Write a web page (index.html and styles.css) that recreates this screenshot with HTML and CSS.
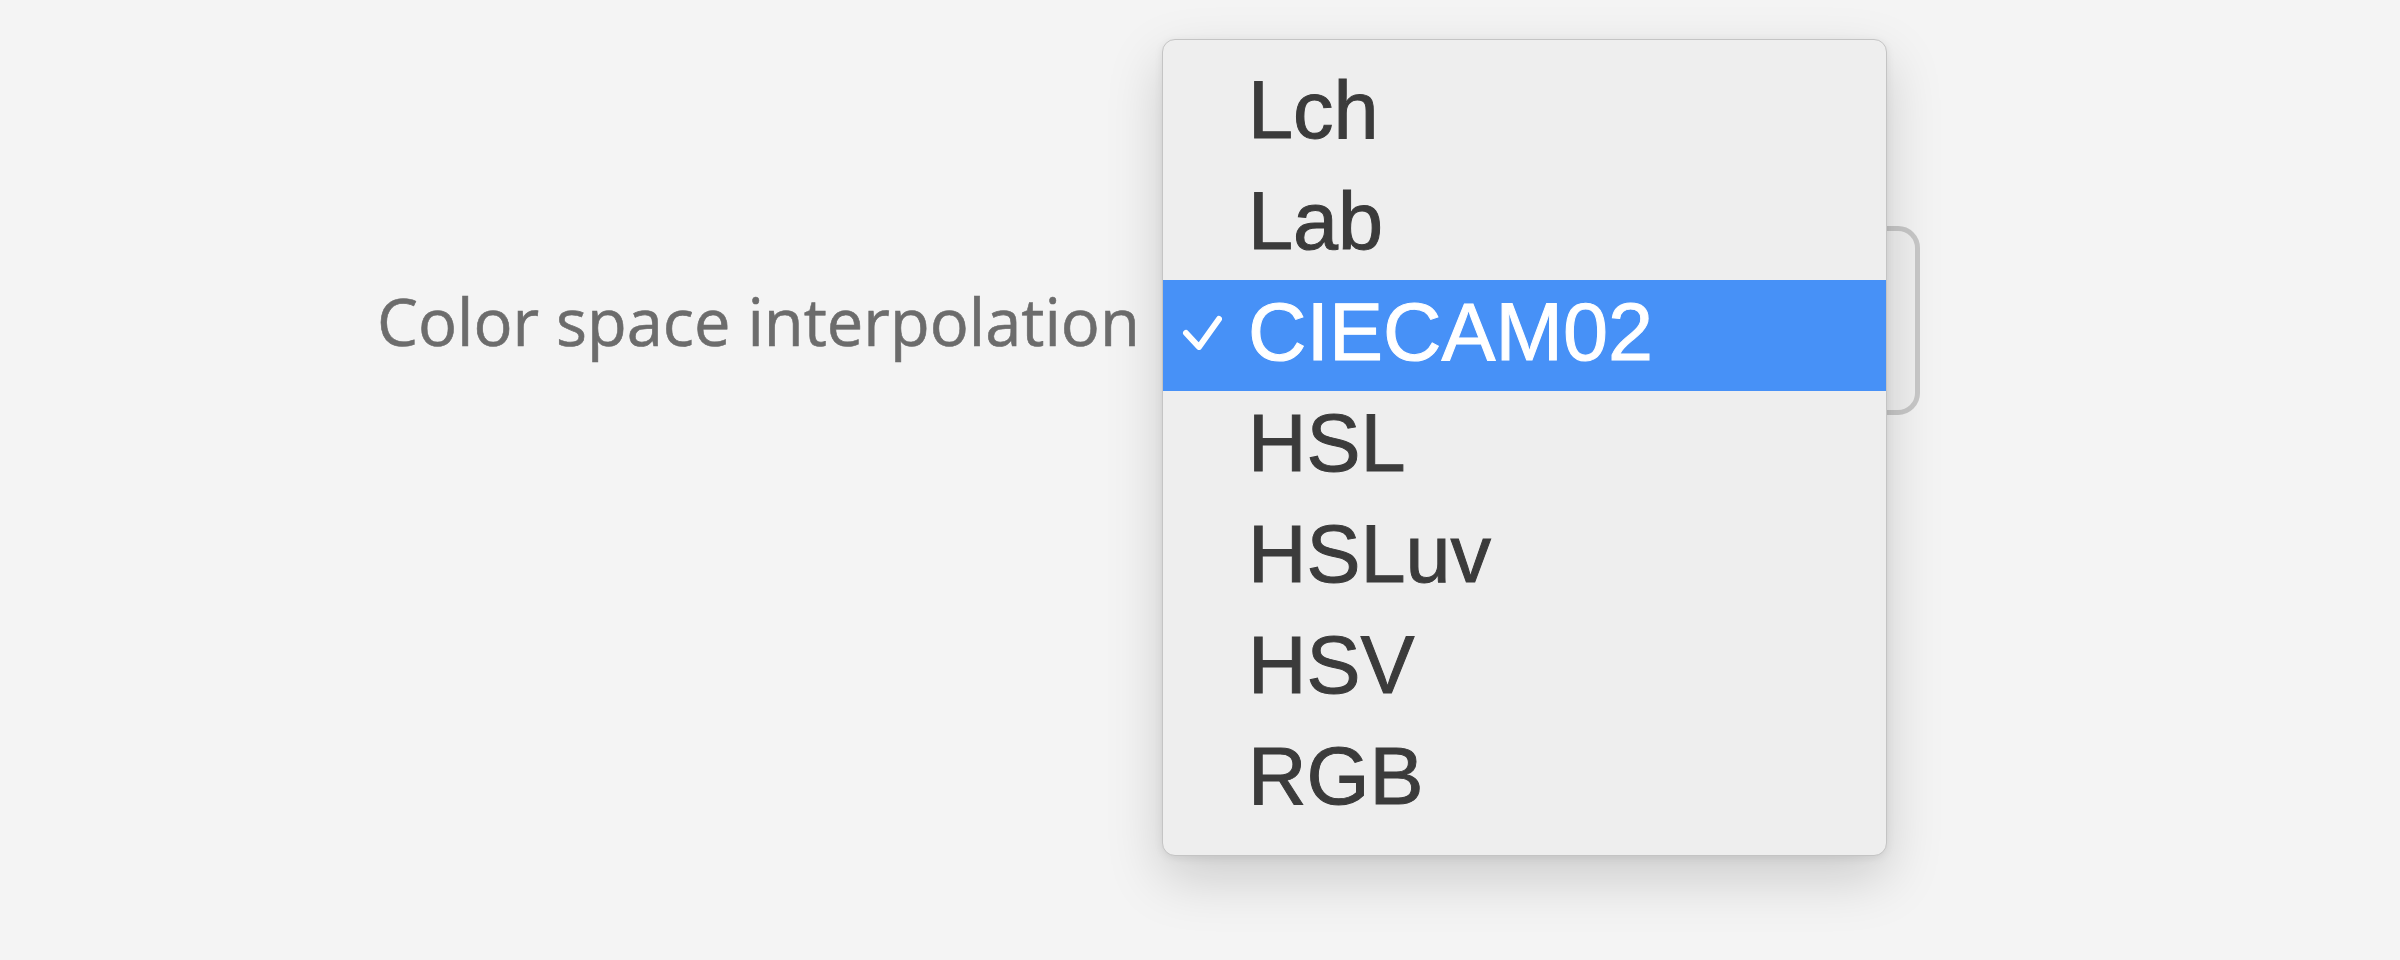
FILE: index.html
```html
<!DOCTYPE html>
<html>
    <head>
        <meta charset="UTF-8" />
        <title>Color space</title>
        <link rel="stylesheet" href="styles.css">
    </head>
    <body>
        <div class="field">
            <label class="label">Color space interpolation</label>
            <div class="select">
                <ul class="menu">
                    <li class="item"><span class="check"></span>Lch</li>
                    <li class="item"><span class="check"></span>Lab</li>
                    <li class="item selected">
                        <span class="check">
                            <svg width="40" height="36" viewBox="0 0 40 36">
                                <polyline points="4,19 17,33 37,5" fill="none" stroke="#fff" stroke-width="6" stroke-linecap="round" stroke-linejoin="round"/>
                            </svg>
                        </span>CIECAM02
                    </li>
                    <li class="item"><span class="check"></span>HSL</li>
                    <li class="item"><span class="check"></span>HSLuv</li>
                    <li class="item"><span class="check"></span>HSV</li>
                    <li class="item"><span class="check"></span>RGB</li>
                </ul>
            </div>
        </div>
    </body>
</html>
```

FILE: styles.css
```css
body {
    margin: 0;
    background-color: #f4f4f4;
    height: 960px;
    overflow: hidden;
}

.field {
    display: flex;
    align-items: center;
    padding-top: 226px;
    padding-left: 377px;
}

.label {
    flex: 0 0 795px;
    font-family: "Open Sans", "Noto Sans", sans-serif;
    font-size: 65px;
    color: #6c6c6c;
    -webkit-text-stroke: 0.6px #6c6c6c;
}

.select {
    position: relative;
    width: 748px;
    height: 189px;
    box-sizing: border-box;
    border: 5px solid #c8c8c8;
    border-radius: 22px;
    background-color: #f0f0f0;
}

.menu {
    position: absolute;
    left: -15px;
    top: -192px;
    width: 725px;
    box-sizing: border-box;
    margin: 0;
    padding: 18px 0 20px 0;
    list-style: none;
    background-color: #eeeeee;
    border: 1px solid #c4c4c4;
    border-radius: 13px;
    box-shadow: 0 22px 55px rgba(0, 0, 0, 0.17), 0 2px 8px rgba(0, 0, 0, 0.08);
}

.item {
    display: flex;
    align-items: center;
    height: 111px;
    box-sizing: border-box;
    padding-bottom: 7px;
    padding-left: 19px;
    font-family: "Liberation Sans", Arial, sans-serif;
    font-size: 81px;
    line-height: 104px;
    color: #3b3b3b;
    -webkit-text-stroke: 1px #3b3b3b;
}

.check {
    flex: 0 0 66px;
    height: 36px;
}

.check svg {
    display: block;
}

.selected {
    background-color: #4791f7;
    color: #ffffff;
    -webkit-text-stroke: 1px #ffffff;
}
```
